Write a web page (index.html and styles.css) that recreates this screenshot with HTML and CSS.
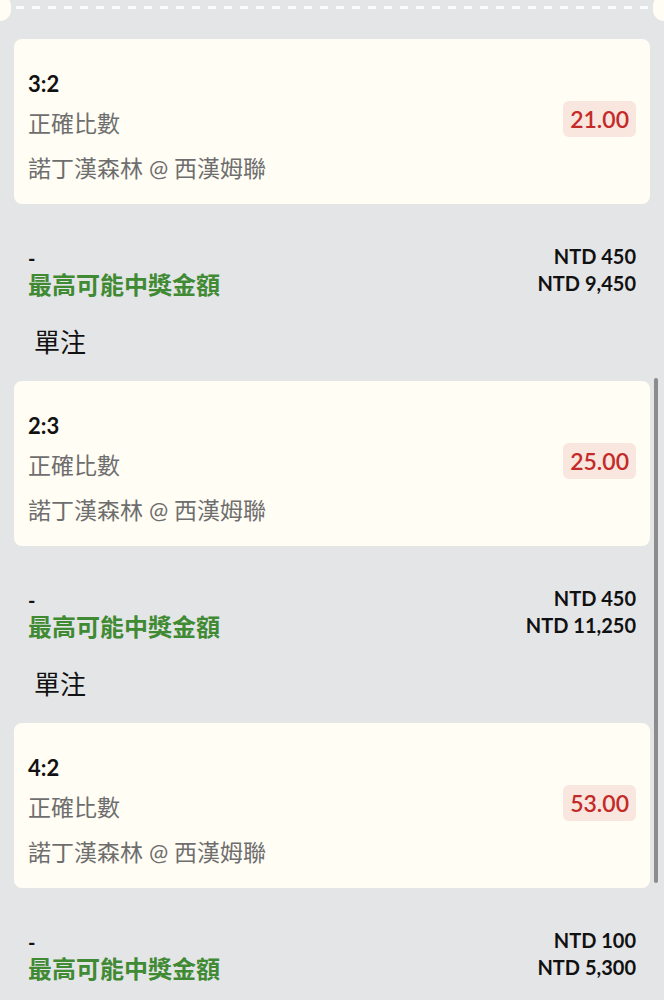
FILE: index.html
```html
<!DOCTYPE html>
<html lang="zh-Hant">
<head>
  <meta charset="UTF-8">
  <meta name="viewport" content="width=device-width, initial-scale=1.0">
  <title>投注單</title>
  <link rel="stylesheet" href="styles.css">
</head>
<body>
  <div class="ticket-edge">
    <div class="notch notch-left"></div>
    <div class="dash-line"></div>
    <div class="notch notch-right"></div>
  </div>

  <div class="bet-card">
    <div class="bet-info">
      <div class="selection">3:2</div>
      <div class="market">正確比數</div>
      <div class="event">諾丁漢森林 @ 西漢姆聯</div>
    </div>
    <div class="odds">21.00</div>
  </div>
  <div class="summary">
    <div class="summary-left">
      <div class="dash">-</div>
      <div class="payout-label">最高可能中獎金額</div>
    </div>
    <div class="summary-right">
      <div>NTD 450</div>
      <div>NTD 9,450</div>
    </div>
  </div>

  <div class="bet-type">單注</div>
  <div class="bet-card">
    <div class="bet-info">
      <div class="selection">2:3</div>
      <div class="market">正確比數</div>
      <div class="event">諾丁漢森林 @ 西漢姆聯</div>
    </div>
    <div class="odds">25.00</div>
  </div>
  <div class="summary">
    <div class="summary-left">
      <div class="dash">-</div>
      <div class="payout-label">最高可能中獎金額</div>
    </div>
    <div class="summary-right">
      <div>NTD 450</div>
      <div>NTD 11,250</div>
    </div>
  </div>

  <div class="bet-type">單注</div>
  <div class="bet-card">
    <div class="bet-info">
      <div class="selection">4:2</div>
      <div class="market">正確比數</div>
      <div class="event">諾丁漢森林 @ 西漢姆聯</div>
    </div>
    <div class="odds">53.00</div>
  </div>
  <div class="summary">
    <div class="summary-left">
      <div class="dash">-</div>
      <div class="payout-label">最高可能中獎金額</div>
    </div>
    <div class="summary-right">
      <div>NTD 100</div>
      <div>NTD 5,300</div>
    </div>
  </div>

  <div class="scroll-thumb"></div>
</body>
</html>
```

FILE: styles.css
```css
body {
  margin: 0;
  padding: 0;
  background: #e4e5e7;
  font-family: Lato, "Noto Sans CJK TC", sans-serif;
  color: #111;
  overflow: hidden;
}

/* top edge of the ticket */
.ticket-edge {
  display: flex;
  align-items: center;
  height: 15px;
}

.notch {
  width: 11px;
  height: 26px;
  flex-shrink: 0;
  background: #fffdf4;
}

.notch-left {
  border-radius: 0 13px 13px 0;
}

.notch-right {
  border-radius: 13px 0 0 13px;
}

.dash-line {
  flex: 1;
  height: 3px;
  margin: 0 5px;
  background: repeating-linear-gradient(90deg, #fbfbfb 0 8px, transparent 8px 16px);
}

.bet-card {
  display: flex;
  justify-content: space-between;
  align-items: flex-start;
  margin: 24px 14px 0;
  padding: 31px 14px 19px;
  background: #fffdf4;
  border-radius: 8px;
}

.selection {
  font-size: 22px;
  font-weight: 700;
  line-height: 28px;
}

.market {
  margin-top: 8px;
  font-size: 23px;
  line-height: 34px;
  color: #6e6e6e;
}

.event {
  margin-top: 11px;
  font-size: 23px;
  line-height: 34px;
  color: #6e6e6e;
}

.odds {
  margin-top: 31px;
  padding: 0 7px;
  height: 36px;
  line-height: 36px;
  font-size: 23px;
  font-weight: 600;
  color: #c42a27;
  background: #f9e6df;
  border-radius: 6px;
}

.summary {
  display: flex;
  justify-content: space-between;
  margin-top: 39px;
  padding: 0 28px;
}

.summary-left {
  padding-top: 2px;
}

.dash {
  font-size: 20px;
  font-weight: 700;
  line-height: 26px;
}

.payout-label {
  font-size: 24px;
  font-weight: 700;
  line-height: 28px;
  color: #3f8a33;
}

.summary-right {
  text-align: right;
  font-size: 20px;
  font-weight: 700;
  line-height: 27px;
}

.bet-type {
  margin-top: 25px;
  padding-left: 34px;
  font-size: 26px;
  line-height: 36px;
  margin-bottom: -3px;
}

.bet-type + .bet-card {
  margin-top: 24px;
}

/* overlay scroll indicator */
.scroll-thumb {
  position: fixed;
  top: 378px;
  right: 6px;
  width: 4px;
  height: 505px;
  border-radius: 2px;
  background: #8c8c8c;
}
```
